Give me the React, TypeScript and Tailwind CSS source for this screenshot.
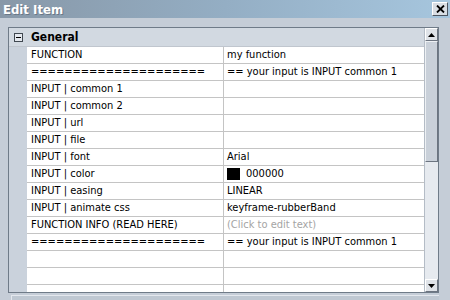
import React from "react";

type Row = { name: string; value?: string; kind?: "color" | "hint" };

const rows: Row[] = [
  { name: "FUNCTION", value: "my function" },
  { name: "=====================", value: "== your input is INPUT common 1" },
  { name: "INPUT | common 1" },
  { name: "INPUT | common 2" },
  { name: "INPUT | url" },
  { name: "INPUT | file" },
  { name: "INPUT | font", value: "Arial" },
  { name: "INPUT | color", value: "000000", kind: "color" },
  { name: "INPUT | easing", value: "LINEAR" },
  { name: "INPUT | animate css", value: "keyframe-rubberBand" },
  { name: "FUNCTION INFO (READ HERE)", value: "(Click to edit text)", kind: "hint" },
  { name: "=====================", value: "== your input is INPUT common 1" },
  { name: "" },
  { name: "" },
  { name: "" },
];

function ScrollButton({ up }: { up: boolean }) {
  return (
    <div className="h-[13px] w-full bg-[#dfe3e8] border-t border-l border-t-white border-l-white border-r border-b border-r-[#6c7480] border-b-[#6c7480] flex items-center justify-center">
      <svg width="7" height="4" viewBox="0 0 7 4">
        {up ? <path d="M3.5 0 L7 4 L0 4 Z" fill="#000" /> : <path d="M0 0 L7 0 L3.5 4 Z" fill="#000" />}
      </svg>
    </div>
  );
}

export default function App() {
  return (
    <div
      className="w-[450px] h-[300px] bg-[#c5cdd7] flex flex-col overflow-hidden"
      style={{ fontFamily: '"DejaVu Sans Condensed", "DejaVu Sans", sans-serif' }}
    >
      {/* title bar */}
      <div className="h-[18px] shrink-0 bg-gradient-to-r from-[#8898a8] via-[#94aec4] to-[#a6c6de] flex items-center justify-between pl-[3px] pr-[2px]">
        <span className="text-white font-bold text-[13px] leading-none [text-shadow:1px_1px_0_#6a7888]">
          Edit Item
        </span>
        <div className="w-[16px] h-[14px] bg-[#d9dee4] border border-t-white border-l-white border-r-[#4d5560] border-b-[#4d5560] flex items-center justify-center">
          <svg width="9" height="8" viewBox="0 0 9 8">
            <path d="M1 0.5 L8 7.5 M8 0.5 L1 7.5" stroke="#000" strokeWidth="1.8" />
          </svg>
        </div>
      </div>

      {/* body */}
      <div className="flex-1 pt-[9px] pl-[8px] pr-[11px] flex flex-col">
        <div className="h-[266px] shrink-0 border border-[#6f7b88] bg-[#cad2dc] flex overflow-hidden">
          <div className="flex-1 flex flex-col text-[11px] text-black">
            {/* category */}
            <div className="h-[19px] shrink-0 flex items-center bg-[#d2d9e1] border-b border-[#c0c6ce]">
              <div className="w-[18px] h-full flex items-center justify-center">
                <div className="w-[9px] h-[9px] border border-[#404850] bg-[#e4e8ee] flex items-center justify-center">
                  <div className="w-[5px] h-px bg-black" />
                </div>
              </div>
              <span className="pl-[4px] font-bold text-[12px]">General</span>
            </div>
            {rows.map((r, i) => (
              <div key={i} className="h-[17px] shrink-0 flex">
                <div className="w-[18px] shrink-0 bg-[#cad2dc]" />
                <div className="w-[197px] shrink-0 bg-white border-b border-r border-[#c4c4c4] pl-[4px] flex items-center whitespace-nowrap overflow-hidden">
                  {r.name}
                </div>
                <div className="flex-1 bg-white border-b border-[#c4c4c4] pl-[3px] flex items-center whitespace-nowrap overflow-hidden">
                  {r.kind === "color" ? (
                    <>
                      <span className="w-[13px] h-[12px] bg-black mr-[6px]" />
                      {r.value}
                    </>
                  ) : r.kind === "hint" ? (
                    <span className="text-[#a4a4a4]">{r.value}</span>
                  ) : (
                    r.value
                  )}
                </div>
              </div>
            ))}
          </div>

          {/* scrollbar */}
          <div className="w-[14px] shrink-0 bg-[#e6eaef] flex flex-col border-l border-[#b4bcc6]">
            <ScrollButton up />
            <div className="h-[121px] bg-[#c9d0d9] border border-t-[#eef1f4] border-l-[#eef1f4] border-r-[#6c7480] border-b-[#6c7480]" />
            <div className="flex-1" />
            <ScrollButton up={false} />
          </div>
        </div>
        <div className="flex-1 mt-[2px] ml-[3px] border-t border-l border-[#e4e8ee] bg-[#bfc8d2]" />
      </div>
    </div>
  );
}
